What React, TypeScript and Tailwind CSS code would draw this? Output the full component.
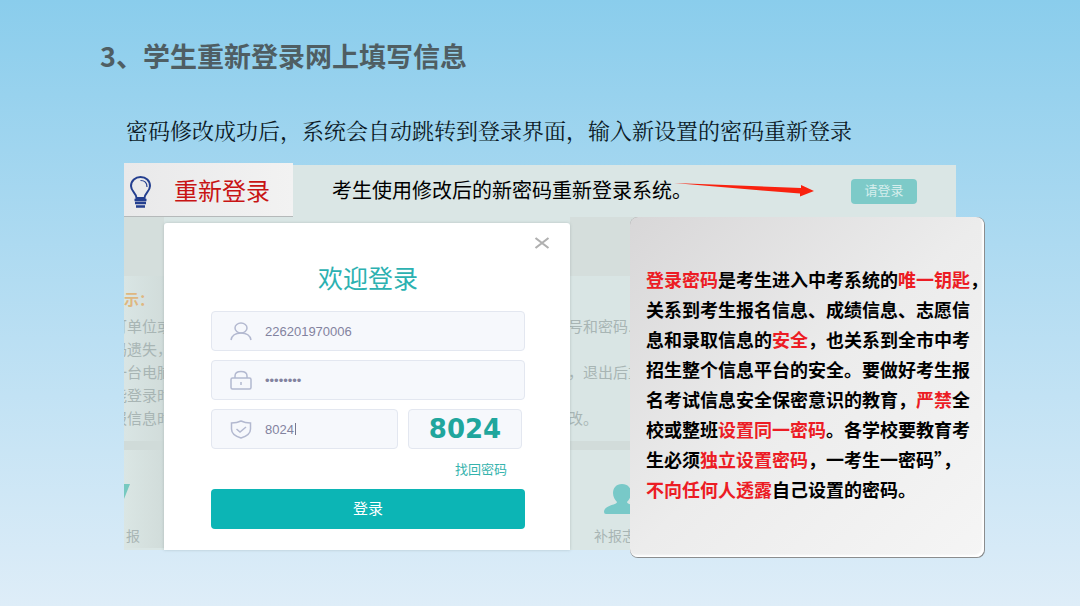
import { useState } from 'react'
import type { ReactNode } from 'react'

const leftLines = ['可单位或', '码遗失，', '一台电脑', '能登录时', '报信息时']
const rightLines = ['号和密码.', '', '，退出后重', '', '改。']

const inputClass =
  'h-10 w-full rounded border border-[#e3e7f0] bg-[#f6f8fc] pl-[53px] pr-3 text-[13px] text-[#83839f] outline-none'

export default function App() {
  return (
    <main
      className="min-h-screen overflow-hidden bg-linear-to-b from-[#8acdec] to-[#deedf8] pb-12"
      style={{ fontFamily: '"Liberation Sans", "Noto Sans CJK SC", sans-serif' }}
    >
      <h1
        className="ml-[100px] pt-9 text-[27px] leading-10 font-bold text-[#4f5e63]"
        style={{ fontFamily: '"Noto Sans CJK SC", sans-serif' }}
      >
        3、学生重新登录网上填写信息
      </h1>
      <p
        className="mt-[38px] ml-[126px] text-[22px] leading-8 text-[#0c1a26]"
        style={{ fontFamily: '"Noto Serif CJK SC", "Noto Sans CJK SC", serif' }}
      >
        密码修改成功后，系统会自动跳转到登录界面，输入新设置的密码重新登录
      </p>

      <section className="relative mx-[124px] mt-[19px] bg-[#dae6e5]">
        <TopBar />
        <div className="flex">
          <LeftStrip />
          <LoginDialog />
          <RightStrip />
        </div>
        <NoticeCard />
      </section>
    </main>
  )
}

function TopBar() {
  return (
    <div className="flex h-13 items-center">
      <div className="-mt-[2px] flex h-[54px] w-[169px] items-center gap-[21px] border-b border-[#b5b9ba] bg-linear-to-r from-[#e9e9ea] to-[#f2f2f2] pt-1 pl-[5px]">
        <BulbIcon />
        <h2 className="text-[24px] leading-8 text-[#c81414]">重新登录</h2>
      </div>
      <p className="ml-[39px] text-[20px] leading-8 whitespace-nowrap text-black">
        考生使用修改后的新密码重新登录系统。
      </p>
      <svg className="-ml-5 h-6 w-[142px] shrink-0" viewBox="0 0 142 24" fill="#f9220f">
        <path d="M2 4 L129 9 V6 L142 12 L128 17.500 V14.500 L90 11.500 Z" />
      </svg>
      <button
        type="button"
        className="mr-[39px] ml-auto h-[25px] w-[66px] rounded bg-[#7dcac8] text-[13px] text-[#d6eeed]"
      >
        请登录
      </button>
    </div>
  )
}

function LeftStrip() {
  return (
    <div className="w-10 shrink-0 overflow-hidden whitespace-nowrap text-[#a8b5b4]">
      <div className="h-[59px] bg-[#d4dedc]" />
      <div className="h-[165px] bg-linear-to-r from-[#d9e5e4] to-[#d1dcda] pt-3">
        <p className="h-[27px] text-[15px] leading-6 font-bold text-[#dfb77f]">示：</p>
        {leftLines.map((line) => (
          <p key={line} className="-ml-3 text-[15px] leading-[23px]">
            {line}
          </p>
        ))}
      </div>
      <div className="h-[9px] bg-[#d0dbd9]" />
      <div className="bg-linear-to-r from-[#dae6e4] to-[#d1dcda] pt-[34px]">
        <svg className="h-4 w-[6px]" viewBox="0 0 6 16" fill="#77c9c0">
          <path d="M0 0 H6 L0 15 Z" />
        </svg>
        <p className="mt-6 ml-[2px] text-[14px] leading-6">报</p>
      </div>
    </div>
  )
}

function RightStrip() {
  return (
    <div className="flex-1 overflow-hidden whitespace-nowrap text-[#a8b5b4]">
      <div className="h-[59px] bg-[#d5dedc]" />
      <div className="h-[165px] bg-[#d9e5e4] pt-[39px]">
        {rightLines.map((line, i) => (
          <p key={i} className="-ml-[2px] h-[23px] text-[15px] leading-[23px]">
            {line}
          </p>
        ))}
      </div>
      <div className="h-[9px] bg-[#d2dcda]" />
      <div className="pt-[34px]">
        <svg className="ml-[34px] h-[30px] w-9" viewBox="0 0 36 30" fill="#78c9c8">
          <path d="M18 0 C12 0 9 4 9 9 C9 13 11 16 13 18 C13 21 0 21 0 28 Q0 30 2 30 H34 Q36 30 36 28 C36 21 23 21 23 18 C25 16 27 13 27 9 C27 4 24 0 18 0 Z" />
        </svg>
        <p className="mt-[10px] ml-6 text-[14px] leading-6">补报志愿</p>
      </div>
    </div>
  )
}

function LoginDialog() {
  const [account, setAccount] = useState('226201970006')
  const [password, setPassword] = useState('87654321')
  const [code, setCode] = useState('8024')

  return (
    <form
      className="relative mt-[6px] w-[406px] shrink-0 rounded-t-[3px] bg-white pt-10 pr-[45px] pb-[21px] pl-[47px] shadow-[0_0_3px_rgba(120,140,140,0.4)]"
      onSubmit={(e) => e.preventDefault()}
    >
      <button type="button" aria-label="关闭" className="absolute top-[13px] right-5 text-[#b0b0b0]">
        <svg className="h-[14px] w-4" viewBox="0 0 16 14" fill="none" stroke="currentColor" strokeWidth="2.200">
          <path d="M1.500 2 L14.500 12 M14.500 2 L1.500 12" />
        </svg>
      </button>
      <h2 className="text-center text-[25px] leading-8 text-[#2cb1b1]">欢迎登录</h2>

      <div className="mt-4 flex flex-col gap-[9px]">
        <Field icon={<UserIcon />}>
          <input
            aria-label="账号"
            className={inputClass}
            value={account}
            onChange={(e) => setAccount(e.target.value)}
          />
        </Field>
        <Field icon={<LockIcon />}>
          <input
            type="password"
            aria-label="密码"
            className={inputClass}
            value={password}
            onChange={(e) => setPassword(e.target.value)}
          />
        </Field>
        <div className="flex gap-[10px] pr-[3px]">
          <Field icon={<ShieldIcon />}>
            <input
              aria-label="验证码"
              className={inputClass}
              value={code}
              onChange={(e) => setCode(e.target.value)}
            />
            <span className="absolute top-[14px] left-[84px] h-3 w-px bg-[#77778f]" />
          </Field>
          <div
            className="flex h-10 w-[114px] shrink-0 items-center justify-center rounded border border-[#e3e7f0] bg-[#f6f8fc] text-[26px] leading-none font-bold text-[#20a69d]"
            style={{ fontFamily: '"DejaVu Sans", sans-serif' }}
          >
            8024
          </div>
        </div>
      </div>

      <div className="mt-[11px] flex justify-end pr-[18px]">
        <a href="#" className="text-[13px] leading-5 text-[#35b3ad]">
          找回密码
        </a>
      </div>
      <button type="submit" className="mt-[9px] h-10 w-full rounded bg-[#0cb5b5] text-[15px] text-white">
        登录
      </button>
    </form>
  )
}

function Field({ icon, children }: { icon: ReactNode; children: ReactNode }) {
  return (
    <div className="relative flex-1">
      <span className="absolute top-[10px] left-[19px] text-[#b3b9d0]">{icon}</span>
      {children}
    </div>
  )
}

function Red({ children }: { children: ReactNode }) {
  return <span className="text-[#ec1c24]">{children}</span>
}

function NoticeCard() {
  return (
    <div className="absolute top-13 -right-[29px] w-[355px] rounded-lg bg-[#8b8d8e] pr-px pb-px">
      <div
        className="rounded-lg bg-linear-to-br from-[#d8d7d8] via-[#ececec] to-[#f5f5f5] pt-[47px] pb-[53px] pl-4 shadow-[inset_-2px_-2px_2px_#fff]"
        style={{ fontFamily: '"Noto Sans CJK SC", sans-serif' }}
      >
        <p className="text-[18px] leading-[30px] font-bold whitespace-nowrap text-black">
          <Red>登录密码</Red>是考生进入中考系统的<Red>唯一钥匙</Red>，<br />
          关系到考生报名信息、成绩信息、志愿信<br />
          息和录取信息的<Red>安全</Red>，也关系到全市中考<br />
          招生整个信息平台的安全。要做好考生报<br />
          名考试信息安全保密意识的教育，<Red>严禁</Red>全<br />
          校或整班<Red>设置同一密码</Red>。各学校要教育考<br />
          生必须<Red>独立设置密码</Red>，一考生一密码”，<br />
          <Red>不向任何人透露</Red>自己设置的密码。
        </p>
      </div>
    </div>
  )
}

function BulbIcon() {
  return (
    <svg className="h-8 w-6" viewBox="0 0 24 32" fill="none" stroke="#243f8f" strokeWidth="2">
      <path d="M7.500 22 C7.500 17 2 15.500 2 10 C2 4.500 6.500 1 11.500 1 C17 1 21 4.500 21 10 C21 15.500 15.500 17 15.500 22 Z" />
      <path d="M11.500 4.500 C15.500 4.500 18 7 18 11" strokeWidth="1.200" />
      <path d="M5.500 24 H17.500 M6 27 H17 M7 30.500 H16" strokeWidth="2.600" />
    </svg>
  )
}

function UserIcon() {
  return (
    <svg className="h-5 w-[22px]" viewBox="0 0 22 20" fill="none" stroke="currentColor" strokeWidth="1.500">
      <ellipse cx="11" cy="7" rx="6" ry="5" />
      <path d="M1 19 C2 14 6 12 11 12 C16 12 20 14 21 19" />
    </svg>
  )
}

function LockIcon() {
  return (
    <svg className="h-5 w-[22px]" viewBox="0 0 22 20" fill="none" stroke="currentColor" strokeWidth="1.500">
      <rect x="1" y="8" width="20" height="11" rx="1.500" />
      <path d="M5 8 V6 C5 3 7.500 1.500 11 1.500 C14.500 1.500 17 3 17 6 V8 M11 12 V15" />
    </svg>
  )
}

function ShieldIcon() {
  return (
    <svg className="h-5 w-[22px]" viewBox="0 0 22 20" fill="none" stroke="currentColor" strokeWidth="1.500">
      <path d="M11 2 C8 3.500 5 4 1.500 4 V10 C1.500 15 6 17.500 11 19 C16 17.500 20.500 15 20.500 10 V4 C17 4 14 3.500 11 2 Z" />
      <path d="M6.500 10 L10 13 L16 8" />
    </svg>
  )
}
